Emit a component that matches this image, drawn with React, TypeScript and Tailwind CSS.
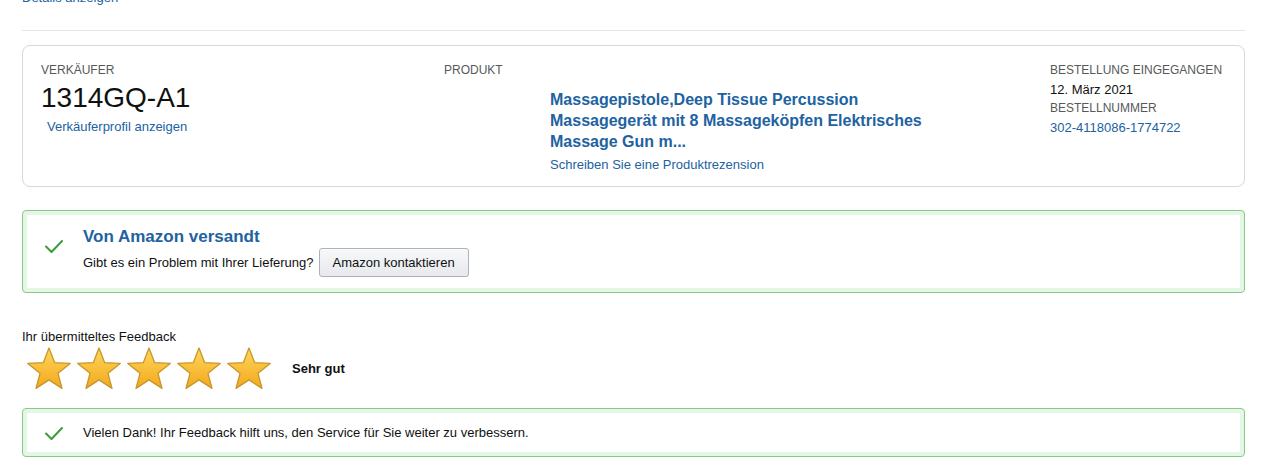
import React from 'react';

const font = { fontFamily: '"Liberation Sans", Arial, sans-serif' };

const Check = () => (
  <svg width="20" height="16" viewBox="0 0 20 16" className="shrink-0">
    <path d="M2 8.5 L7.5 14 L18 3" fill="none" stroke="#3d9a3d" strokeWidth="2" strokeLinecap="round" strokeLinejoin="round" />
  </svg>
);

const Star = ({ id }: { id: string }) => (
  <svg width="48" height="46" viewBox="0 0 48 46">
    <defs>
      <linearGradient id={id} x1="0" y1="0" x2="0" y2="1">
        <stop offset="0%" stopColor="#ffd75a" />
        <stop offset="100%" stopColor="#f2a81e" />
      </linearGradient>
    </defs>
    <path
      d="M24 2 L29.6 16.6 L45.2 17.4 L33 27.3 L37 42.4 L24 33.9 L11 42.4 L15 27.3 L2.8 17.4 L18.4 16.6 Z"
      fill={`url(#${id})`}
      stroke="#c9962b"
      strokeWidth="1.3"
      strokeLinejoin="round"
    />
  </svg>
);

const Label: React.FC<{ children: React.ReactNode }> = ({ children }) => (
  <div className="text-[12px] leading-[19px] uppercase text-[#565959]">{children}</div>
);

export default function App() {
  return (
    <div className="bg-white w-[1261px] h-[465px] overflow-hidden pl-[22px] pr-[16px] text-[#0f1111]" style={font}>
      <div className="-mt-[8px] h-[12px] text-[13px] leading-[12px] text-[#2162a1]">Details anzeigen</div>
      <div className="mt-[26px] border-t border-[#e7e7e7]" />

      {/* Bestellkarte */}
      <div className="mt-[14px] h-[142px] rounded-[8px] border border-[#d5d9d9] flex pt-[15px] pl-[18px]">
        <div className="w-[403px]">
          <Label>Verkäufer</Label>
          <div className="text-[28px] leading-[34px] mt-[1px]">1314GQ-A1</div>
          <a className="block ml-[6px] mt-[2px] text-[13px] leading-[19px] text-[#2162a1]">Verkäuferprofil anzeigen</a>
        </div>
        <div className="w-[606px] flex flex-col">
          <Label>Produkt</Label>
          <div className="pl-[106px] mt-[9px]">
            <div className="text-[16px] leading-[21px] font-bold text-[#2162a1]">
              <div>Massagepistole,Deep Tissue Percussion</div>
              <div>Massagegerät mit 8 Massageköpfen Elektrisches</div>
              <div>Massage Gun m...</div>
            </div>
            <a className="block mt-[3px] text-[13px] leading-[19px] text-[#2162a1]">Schreiben Sie eine Produktrezension</a>
          </div>
        </div>
        <div>
          <Label>Bestellung eingegangen</Label>
          <div className="text-[13px] leading-[19px]">12. März 2021</div>
          <Label>Bestellnummer</Label>
          <a className="block text-[13px] leading-[19px] text-[#2162a1]">302-4118086-1774722</a>
        </div>
      </div>

      {/* Versand-Hinweis */}
      <div className="mt-[23px] h-[83px] rounded-[4px] border border-[#88c888] shadow-[inset_0_0_0_4px_#e4f6e4] flex pt-[15px] pl-[21px]">
        <div className="pt-[12px]"><Check /></div>
        <div className="ml-[19px]">
          <div className="text-[17px] leading-[21px] font-bold text-[#2162a1]">Von Amazon versandt</div>
          <div className="flex items-center mt-[1px]">
            <span className="text-[13px]">Gibt es ein Problem mit Ihrer Lieferung?</span>
            <button className="ml-[5px] h-[29px] px-[13px] rounded-[3px] border border-[#adb1b8] bg-gradient-to-b from-[#f7f8fa] to-[#e7e9ec] text-[13px] text-[#0f1111] shadow-[0_1px_0_rgba(255,255,255,0.6)_inset]">
              Amazon kontaktieren
            </button>
          </div>
        </div>
      </div>

      {/* Feedback */}
      <div className="mt-[35px] text-[13px] leading-[17px]">Ihr übermitteltes Feedback</div>
      <div className="flex items-center mt-[1px] ml-[3px]">
        <div className="flex gap-[2px]">
          {['s1', 's2', 's3', 's4', 's5'].map((id) => (
            <Star key={id} id={id} />
          ))}
        </div>
        <span className="ml-[19px] text-[13px] font-bold">Sehr gut</span>
      </div>

      <div className="mt-[16px] h-[49px] rounded-[4px] border border-[#88c888] shadow-[inset_0_0_0_4px_#e4f6e4] flex items-center pl-[21px]">
        <Check />
        <span className="ml-[19px] text-[13px]">Vielen Dank! Ihr Feedback hilft uns, den Service für Sie weiter zu verbessern.</span>
      </div>
    </div>
  );
}
